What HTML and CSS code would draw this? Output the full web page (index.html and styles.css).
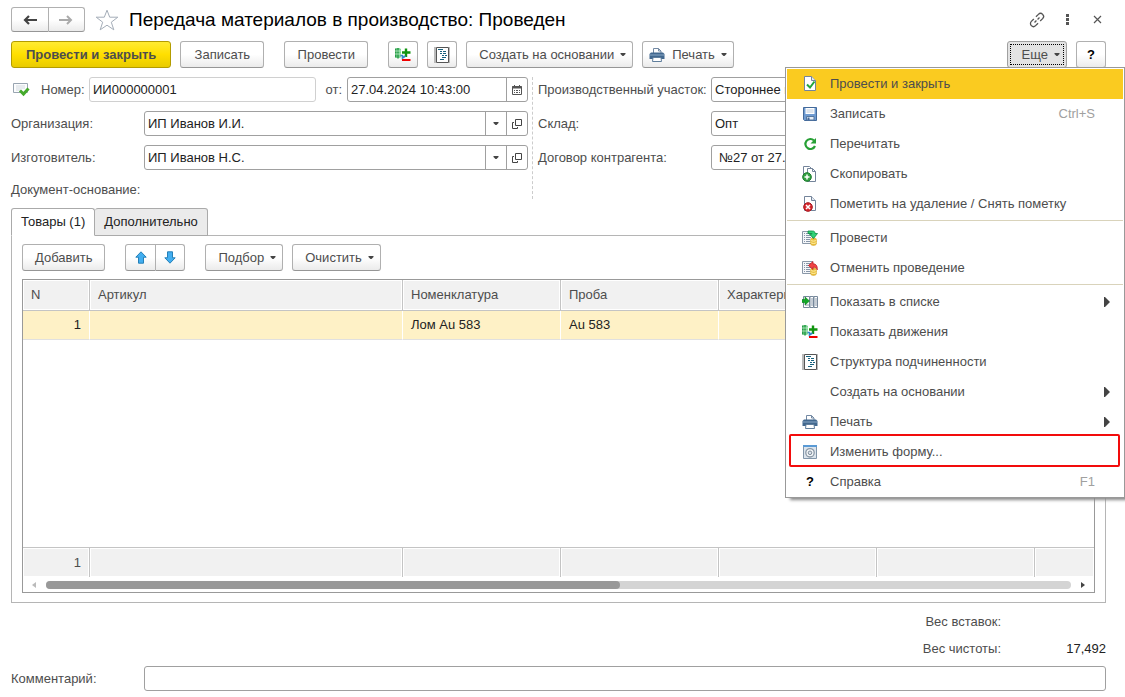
FILE: index.html
```html
<!DOCTYPE html>
<html lang="ru">
<head>
<meta charset="utf-8">
<title>Передача материалов в производство</title>
<link rel="stylesheet" href="styles.css">
</head>
<body>
<svg class="sprite" aria-hidden="true">
  <symbol id="i-caret" viewBox="0 0 6 4"><path d="M.5 0h5v1L3.500 3h-1L.5 1z" fill="#444"/></symbol>
  <symbol id="i-sub" viewBox="0 0 6 10"><path d="M0 0h1l5 5-5 5H0z" fill="#444"/></symbol>
  <symbol id="i-open" viewBox="0 0 10 10"><path d="M3.5.5h6v6h-6z" fill="none" stroke="#444"/><path d="M2 3.500H.5v6h5V8" fill="none" stroke="#444"/></symbol>
  <symbol id="i-moves" viewBox="0 0 16 16"><path d="M0 2c1-1.500 5-1.500 6 0v8c-1 1.500-5 1.500-6 0z" fill="#7fd694"/><path d="M.8 1.500v9M3 1v10.500" stroke="#138c35" stroke-width="1.200"/><path d="M0 4h6M0 7h6" stroke="#d5f5dc" stroke-width=".7"/><path d="M11 1.500V10M7 5.500h8.500" stroke="#10940f" stroke-width="2.400"/><path d="M5.500 8.500h2V11l3-2" fill="none" stroke="#3288c9" stroke-width="1.600"/><path d="M7 13h8.500" stroke="#f00000" stroke-width="2"/></symbol>
  <symbol id="i-struct" viewBox="0 0 16 16"><path d="M0 0h2v16H0z" fill="#bbb"/><path d="M2.500.5h12v15h-12z" fill="#fff" stroke="#555"/><path d="M15.500 0v16" stroke="#bbb"/><path d="M4 2.500h5M6 4.500h2M9 4.500h3M6 6.500h2M9 6.500h3M8 8.500h2M11 8.500h2M8 10.500h4M6 12.500h4" stroke="#17617e"/></symbol>
  <symbol id="i-print" viewBox="0 0 16 16"><path d="M4.500 6V1.500h5l2.500 2.500v2" fill="#fff" stroke="#7389a3"/><path d="M9.500 1.500V4H12" fill="none" stroke="#7389a3"/><path d="M2 5.500h12l1.500 1.500v5H.5V7z" fill="#42688f"/><path d="M1 8h14" stroke="#8aa9c7"/><path d="M4 10.500h8l.5 4h-9z" fill="#fff" stroke="#607e9c"/></symbol>
  <symbol id="i-save" viewBox="0 0 16 16"><path d="M1.500 1.500h13v13h-12l-1-1z" fill="#6f9bd1" stroke="#42699a"/><path d="M3.500 2h9v6h-9z" fill="#fff"/><path d="M4.500 4h7M4.500 6h7" stroke="#bccbdc"/><path d="M4.500 10.500h7.500V14H4.500z" fill="#e7eef6" stroke="#54779f"/><path d="M5.500 11.500h2V14h-2z" fill="#42699a"/></symbol>
  <symbol id="i-page" viewBox="0 0 16 16"><path d="M2.500.5h7l4 4v10h-11z" fill="#fff" stroke="#74849a"/><path d="M9.500.5v4h4" fill="#e3eaf2" stroke="#74849a"/></symbol>
  <symbol id="i-list" viewBox="0 0 16 16"><path d="M.5 1.500h10v12H.5z" fill="#f5f7fa" stroke="#8a98a8"/><path d="M2 3.500h1M2 5.500h1M2 7.500h1M2 9.500h1M2 11.500h1M4 3.500h5M4 5.500h5M4 7.500h5M4 9.500h4M4 11.500h4" stroke="#8796a8"/><path d="M8.500 9.500v4c0 2.500 6 2.500 6 0v-4c0-2-6-2-6 0z" fill="#eabf3d" stroke="#d3a121" stroke-width=".6"/><path d="M8.500 10c1 1.500 5 1.500 6 0M8.500 12.300c1 1.500 5 1.500 6 0" fill="none" stroke="#fff0ac"/></symbol>
</svg>

<header class="titlebar">
  <div class="pair">
    <button class="btn pair-btn" type="button" aria-label="Назад"><svg width="14" height="10" viewBox="0 0 14 10"><path d="M14 5H2M6 1L2 5l4 4" fill="none" stroke="#444" stroke-width="2.200"/></svg></button>
    <button class="btn pair-btn" type="button" aria-label="Вперед"><svg width="14" height="10" viewBox="0 0 14 10"><path d="M0 5h12M8 1l4 4-4 4" fill="none" stroke="#aaa" stroke-width="2"/></svg></button>
  </div>
  <button class="bare star" type="button" aria-label="В избранное"><svg width="24" height="22" viewBox="0 0 24 22"><path d="M12 1.200l2.700 7h8.100l-6.500 5 2.500 7.600L12 16.200l-6.800 4.600 2.500-7.600-6.500-5h8.100z" fill="#fff" stroke="#a4adb8"/></svg></button>
  <h1 class="title">Передача материалов в производство: Проведен</h1>
  <div class="window-tools">
    <button class="bare tool" type="button" aria-label="Ссылка"><svg width="18" height="18" viewBox="0 0 18 18"><g fill="none" stroke="#555" stroke-width="1.300" transform="rotate(-45 9 9)"><path d="M7.500 6H4a3 3 0 0 0 0 6h3.500M10.500 6H14a3 3 0 0 1 0 6h-3.500M5.500 9h2.700M9.800 9h2.700"/></g></svg></button>
    <button class="bare tool" type="button" aria-label="Меню"><svg width="3" height="11" viewBox="0 0 3 11"><path d="M0 0h3v3H0zM0 4h3v3H0zM0 8h3v3H0z" fill="#555"/></svg></button>
    <button class="bare tool" type="button" aria-label="Закрыть"><svg width="9" height="9" viewBox="0 0 9 9"><path d="M1 1l7 7M8 1L1 8" stroke="#555" stroke-width="1.200"/></svg></button>
  </div>
</header>

<div class="toolbar">
  <div class="group">
    <button class="btn primary" type="button">Провести и закрыть</button>
    <button class="btn" type="button">Записать</button>
  </div>
  <button class="btn" type="button">Провести</button>
  <div class="group">
    <button class="btn square" type="button" aria-label="Показать движения"><svg width="16" height="16"><use href="#i-moves"/></svg></button>
    <button class="btn square" type="button" aria-label="Структура подчиненности"><svg width="16" height="16"><use href="#i-struct"/></svg></button>
    <button class="btn drop" type="button">Создать на основании<svg width="6" height="4"><use href="#i-caret"/></svg></button>
    <button class="btn drop print" type="button"><svg width="16" height="16"><use href="#i-print"/></svg>Печать<svg width="6" height="4"><use href="#i-caret"/></svg></button>
  </div>
  <div class="group end">
    <button class="btn drop more" type="button" aria-expanded="true">Еще<svg width="6" height="4"><use href="#i-caret"/></svg></button>
    <button class="btn square help" type="button">?</button>
  </div>

  <div class="menu" role="menu">
    <button class="item current" role="menuitem" type="button"><svg width="16" height="16"><use href="#i-page"/><path d="M5 8.500l3 3 4.500-6" fill="none" stroke="#22a53c" stroke-width="2"/></svg><span>Провести и закрыть</span></button>
    <button class="item" role="menuitem" type="button"><svg width="16" height="16"><use href="#i-save"/></svg><span>Записать</span><kbd>Ctrl+S</kbd></button>
    <button class="item" role="menuitem" type="button"><svg width="16" height="16"><path d="M12 4.500A5 5 0 1 0 13 10" fill="none" stroke="#27a035" stroke-width="2.200"/><path d="M14 2v5.500H8.500z" fill="#27a035"/></svg><span>Перечитать</span></button>
    <button class="item" role="menuitem" type="button"><svg width="16" height="16"><path d="M1.500.5h6l3 3v9h-9z" fill="#fff" stroke="#74849a"/><path d="M5.500 2.500h5l3 3v10h-8z" fill="#fff" stroke="#74849a"/><path d="M10.500 2.500v3h3" fill="none" stroke="#74849a"/><circle cx="5" cy="11" r="4.300" fill="#34a243" stroke="#187a2a"/><path d="M5 8.500v5M2.500 11h5" stroke="#fff" stroke-width="1.500"/></svg><span>Скопировать</span></button>
    <button class="item" role="menuitem" type="button"><svg width="16" height="16"><use href="#i-page"/><circle cx="6" cy="11" r="4.300" fill="#d92a30" stroke="#a3131c"/><path d="M4 9l4 4M8 9l-4 4" stroke="#fff" stroke-width="1.500"/></svg><span>Пометить на удаление / Снять пометку</span></button>
    <hr class="rule">
    <button class="item" role="menuitem" type="button"><svg width="16" height="16"><use href="#i-list"/><path d="M6 1h4.500c2 0 2.500 1 2.500 2.500h2.500L11.500 8.500 7.500 4H10V3.500H6z" fill="#2fd276" stroke="#0d8c43" stroke-width=".8"/></svg><span>Провести</span></button>
    <button class="item" role="menuitem" type="button"><svg width="16" height="16"><use href="#i-list"/><path d="M6.500 5.500l4.500-4v2.300c3 0 4.500 2 4.300 6-1-2-2-2.600-4.300-2.600v2.300z" fill="#f04343" stroke="#ba1d24" stroke-width=".8"/></svg><span>Отменить проведение</span></button>
    <hr class="rule">
    <button class="item" role="menuitem" type="button"><svg width="16" height="16"><path d="M1.500 2.500h6v11h-6zM8 2.500h3.500v11H8zM12 2.500h3.500v11H12z" fill="#fff" stroke="#77889b"/><path d="M9 5h2M9 7h2M9 9h2M9 11h2M13 5h2M13 7h2M13 9h2M13 11h2M3 11h4" stroke="#8b9bac"/><path d="M0 5.500h3V3l4.500 4L3 11V8.500H0z" fill="#13a829" stroke="#078019" stroke-width=".6"/></svg><span>Показать в списке</span><svg class="sub" width="6" height="10"><use href="#i-sub"/></svg></button>
    <button class="item" role="menuitem" type="button"><svg width="16" height="16"><use href="#i-moves"/></svg><span>Показать движения</span></button>
    <button class="item" role="menuitem" type="button"><svg width="16" height="16"><use href="#i-struct"/></svg><span>Структура подчиненности</span></button>
    <button class="item" role="menuitem" type="button"><i class="no-icon"></i><span>Создать на основании</span><svg class="sub" width="6" height="10"><use href="#i-sub"/></svg></button>
    <button class="item" role="menuitem" type="button"><svg width="16" height="16"><use href="#i-print"/></svg><span>Печать</span><svg class="sub" width="6" height="10"><use href="#i-sub"/></svg></button>
    <button class="item marked" role="menuitem" type="button"><svg width="16" height="16"><path d="M1.500 1.500h13v13h-13z" fill="#dce4ec" stroke="#8195a9"/><path d="M1 1h14v2H1z" fill="#5a9ad5"/><circle cx="8" cy="8.800" r="4.200" fill="#f6f8fa" stroke="#8a98a6" stroke-width="1.300"/><circle cx="8" cy="8.800" r="1.800" fill="#dce4ec" stroke="#7c8b9a"/></svg><span>Изменить форму...</span></button>
    <button class="item" role="menuitem" type="button"><b class="no-icon">?</b><span>Справка</span><kbd>F1</kbd></button>
  </div>
</div>

<main>
  <div class="form">
    <section class="column">
      <div class="row">
        <svg class="status" width="17" height="16" viewBox="0 0 17 16"><path d="M.5 1.500h14v9H.5z" fill="#fbfcfd" stroke="#99a5b1"/><path d="M3 4h9M3 6h9M3 8h5" stroke="#d3dae0"/><path d="M7 8.500l3.500 3.500 5-5.500" fill="none" stroke="#45aa2c" stroke-width="3"/></svg>
        <label class="number-label" for="number">Номер:</label>
        <input class="box number" id="number" value="ИИ000000001">
        <label class="date-label" for="date">от:</label>
        <div class="box field"><input id="date" value="27.04.2024 10:43:00"><button type="button" aria-label="Календарь"><svg width="10" height="10" viewBox="0 0 10 10"><path d="M.5 1.500h9v8h-9z" fill="#fff" stroke="#555"/><path d="M0 2.500h10" stroke="#555" stroke-width="2"/><path d="M2.500 0v2M7.500 0v2" stroke="#555"/><path d="M2 5.500h1M4 5.500h2M7 5.500h1M2 7.500h1M4 7.500h2M7 7.500h1" stroke="#555"/></svg></button></div>
      </div>
      <div class="row">
        <label class="label" for="org">Организация:</label>
        <div class="box field"><input id="org" value="ИП Иванов И.И."><button type="button" aria-label="Выбрать организацию"><svg width="6" height="4"><use href="#i-caret"/></svg></button><button type="button" aria-label="Открыть организацию"><svg width="10" height="10"><use href="#i-open"/></svg></button></div>
      </div>
      <div class="row">
        <label class="label" for="maker">Изготовитель:</label>
        <div class="box field"><input id="maker" value="ИП Иванов Н.С."><button type="button" aria-label="Выбрать изготовителя"><svg width="6" height="4"><use href="#i-caret"/></svg></button><button type="button" aria-label="Открыть изготовителя"><svg width="10" height="10"><use href="#i-open"/></svg></button></div>
      </div>
      <div class="basis">Документ-основание:</div>
    </section>
    <section class="column second">
      <div class="row"><label class="label" for="site">Производственный участок:</label><input class="box" id="site" value="Стороннее производство"></div>
      <div class="row"><label class="label" for="store">Склад:</label><input class="box" id="store" value="Опт"></div>
      <div class="row"><label class="label" for="contract">Договор контрагента:</label><input class="box contract" id="contract" value="№27 от 27.04.2024"></div>
    </section>
  </div>

  <div class="tabs" role="tablist">
    <button class="tab selected" role="tab" type="button">Товары (1)</button>
    <button class="tab" role="tab" type="button">Дополнительно</button>
  </div>
  <section class="panel">
    <div class="panel-tools">
      <button class="btn" type="button">Добавить</button>
      <div class="pair small">
        <button class="btn pair-btn" type="button" aria-label="Вверх"><svg width="12" height="13" viewBox="0 0 12 13"><path d="M6 .8l5.200 5.400H8.500v6h-5v-6H.8z" fill="#42aef0" stroke="#2580b8"/></svg></button>
        <button class="btn pair-btn" type="button" aria-label="Вниз"><svg width="12" height="13" viewBox="0 0 12 13"><path d="M6 12.200L.8 6.800h2.700v-6h5v6h2.700z" fill="#42aef0" stroke="#2580b8"/></svg></button>
      </div>
      <div class="group">
        <button class="btn drop" type="button">Подбор<svg width="6" height="4"><use href="#i-caret"/></svg></button>
        <button class="btn drop" type="button">Очистить<svg width="6" height="4"><use href="#i-caret"/></svg></button>
      </div>
    </div>
    <div class="grid">
      <table>
        <colgroup><col class="c-n"><col><col class="c-mid"><col class="c-mid"><col class="c-mid"><col class="c-mid"><col class="c-last"></colgroup>
        <thead><tr><th>N</th><th>Артикул</th><th>Номенклатура</th><th>Проба</th><th>Характеристика</th><th></th><th></th></tr></thead>
        <tbody>
          <tr class="active"><td class="num">1</td><td></td><td>Лом Au 583</td><td>Au 583</td><td></td><td></td><td></td></tr>
          <tr class="filler"><td colspan="7"></td></tr>
        </tbody>
        <tfoot><tr><td class="num">1</td><td></td><td></td><td></td><td></td><td></td><td></td></tr></tfoot>
      </table>
      <div class="scroll">
        <svg width="4" height="6" viewBox="0 0 4 6"><path d="M4 0v6L0 3z" fill="#bbb"/></svg>
        <div class="track"><div class="thumb"></div></div>
        <svg width="4" height="6" viewBox="0 0 4 6"><path d="M0 0v6l4-3z" fill="#444"/></svg>
      </div>
    </div>
  </section>

  <dl class="totals">
    <dt>Вес вставок:</dt><dd></dd>
    <dt>Вес чистоты:</dt><dd>17,492</dd>
  </dl>
  <div class="row">
    <label class="label" for="comment">Комментарий:</label>
    <input class="box" id="comment">
  </div>
</main>
</body>
</html>
```
FILE: styles.css
```css
* { box-sizing: border-box; }
body {
  margin: 0;
  padding: 7px 19px 6px 11px;
  background: #fff;
  color: #4d4d4d;
  font: 13px/16px "Liberation Sans", Arial, sans-serif;
}
button, input { margin: 0; font: inherit; color: inherit; }
svg { display: block; flex: none; }
.sprite { position: absolute; width: 0; height: 0; }

.titlebar { display: flex; align-items: center; height: 25px; }
.title { margin: 0; font-size: 19px; line-height: 24px; font-weight: 400; color: #000; white-space: nowrap; }
.bare { display: flex; align-items: center; justify-content: center; padding: 0; border: 0; background: none; }
.star { width: 24px; margin: 0 10px; }
.window-tools { display: flex; margin-left: auto; gap: 12px; }
.tool { width: 18px; height: 18px; }

.btn {
  display: flex;
  align-items: center;
  justify-content: center;
  height: 27px;
  padding: 0 12px;
  border: 1px solid #b0b0b0;
  border-bottom-color: #969696;
  border-radius: 3px;
  background: linear-gradient(#fff 50%, #ebebeb);
  white-space: nowrap;
}
.primary { padding: 0 14px; font-weight: 700; border-color: #b39c00; background: linear-gradient(#ffeb33, #ffdf00 50%, #e9cb00); }
.square { width: 30px; padding: 0; }
.drop { gap: 6px; padding-right: 6px; }
.print { padding-left: 6px; }
.print svg:first-child { margin-right: 1px; }
.more { padding-left: 14px; background: #e3e3e3; border-color: #a0a0a0; outline: 1px dotted #000; outline-offset: -4px; }
.help { color: #000; font-weight: 700; }
.pair { display: flex; width: 74px; }
.pair-btn { flex: 1; height: 25px; padding: 0; border-radius: 3px 0 0 3px; }
.pair-btn + .pair-btn { border-left: 0; border-radius: 0 3px 3px 0; }
.small { width: 60px; }
.small .pair-btn { height: 27px; }
.group { display: flex; gap: 9px; }
.end { margin-left: auto; }
.toolbar { position: relative; display: flex; gap: 20px; margin-top: 9px; }
.toolbar .btn:not(.square, .drop, .primary) { min-width: 84px; }

.menu {
  position: absolute;
  z-index: 2;
  top: 26px;
  right: -19px;
  width: 340px;
  padding: 1px 1px 0;
  border: 1px solid #999;
  background: #fff;
  box-shadow: 4px 3px 3px -1px #888;
}
.item {
  position: relative;
  display: flex;
  align-items: center;
  gap: 12px;
  width: 100%;
  height: 30px;
  padding: 0 28px 0 15px;
  border: 0;
  background: none;
  text-align: left;
}
.item span { flex: 1; white-space: nowrap; }
.item kbd { font: inherit; color: #a0a0a0; }
.item .sub { margin-right: -15px; }
.current { background: #facb20; }
.no-icon { width: 16px; text-align: center; color: #000; }
.rule { height: 1px; margin: 1px 0 2px; border: 0; background: #d9d3bb; }
.marked::after { content: ""; position: absolute; inset: -3px 3px 0 2px; border: 2px solid #f20c0c; border-radius: 2px; }

.form { display: grid; grid-template-columns: minmax(0, 517fr) minmax(0, 574fr); gap: 4px; margin-top: 9px; }
.column { display: flex; flex-direction: column; gap: 9px; }
.second { padding-left: 5px; border-left: 1px dashed #ccc; }
.row { display: flex; align-items: center; }
.label { flex: none; width: 133px; }
.second .label { width: 173px; }
.status { margin: 0 11px 0 2px; }
.number-label { width: 48px; }
.date-label { margin: 0 5px 0 10px; }
.box {
  flex: 1;
  min-width: 0;
  height: 25px;
  padding: 0 3px;
  border: 1px solid #a0a0a0;
  border-radius: 3px;
  background: #fff;
  color: #222;
}
.number { flex: 226 1 0; border-color: #d0d0d0; }
.number ~ .field { flex: 182 1 0; }
.contract { padding-left: 7px; }
.field { display: flex; padding-right: 0; }
.field input { flex: 1; min-width: 0; padding: 0; border: 0; background: none; outline: 0; }
.field button { display: flex; align-items: center; justify-content: center; width: 21px; padding: 0; border: 0; border-left: 1px solid #a0a0a0; background: none; }
.basis { height: 20px; padding-top: 3px; }

.tabs { display: flex; margin-top: 9px; }
.tab { height: 28px; padding: 0 9px; border: 1px solid #aaa; border-radius: 3px 3px 0 0; background: #ebebeb; color: #222; }
.tab + .tab { border-left: 0; }
.selected { position: relative; z-index: 1; background: #fff; border-bottom-color: #fff; }
.panel { margin-top: -1px; padding: 8px 10px 9px; border: 1px solid #b5b5b5; }
.panel-tools { display: flex; gap: 20px; }

.grid { margin-top: 8px; border: 1px solid #999; }
table { width: 100%; border-collapse: separate; border-spacing: 0; table-layout: fixed; }
.c-n { width: 67px; }
.c-mid { width: 158px; }
.c-last { width: 59px; }
th, td { padding: 0 8px; font-weight: 400; text-align: left; white-space: nowrap; overflow: hidden; }
th, tfoot td { height: 31px; background: #f1f1f1; border-right: 1px solid #c4c4c4; box-shadow: inset 0 0 0 1px #fff; }
th { border-bottom: 1px solid #c4c4c4; }
tfoot td { height: 30px; border-top: 1px solid #c4c4c4; }
th:last-child, tfoot td:last-child { border-right: 0; }
.active td { height: 29px; background: #fef1c6; border-right: 1px solid #fff; border-bottom: 1px solid #e0e0e0; color: #222; }
td.num { text-align: right; }
.filler td { height: 207px; }
.scroll { display: flex; align-items: center; gap: 10px; height: 15px; padding: 0 9px; }
.track { flex: 1; height: 8px; border-radius: 4px; background: #d4d4d4; }
.thumb { width: 56%; height: 8px; border-radius: 4px; background: #999; }

.totals { display: grid; grid-template-columns: 1fr 105px; margin: 5px 0 4px; line-height: 27px; text-align: right; }
.totals dt, .totals dd { height: 27px; margin: 0; }
.totals dd { color: #222; }
```
